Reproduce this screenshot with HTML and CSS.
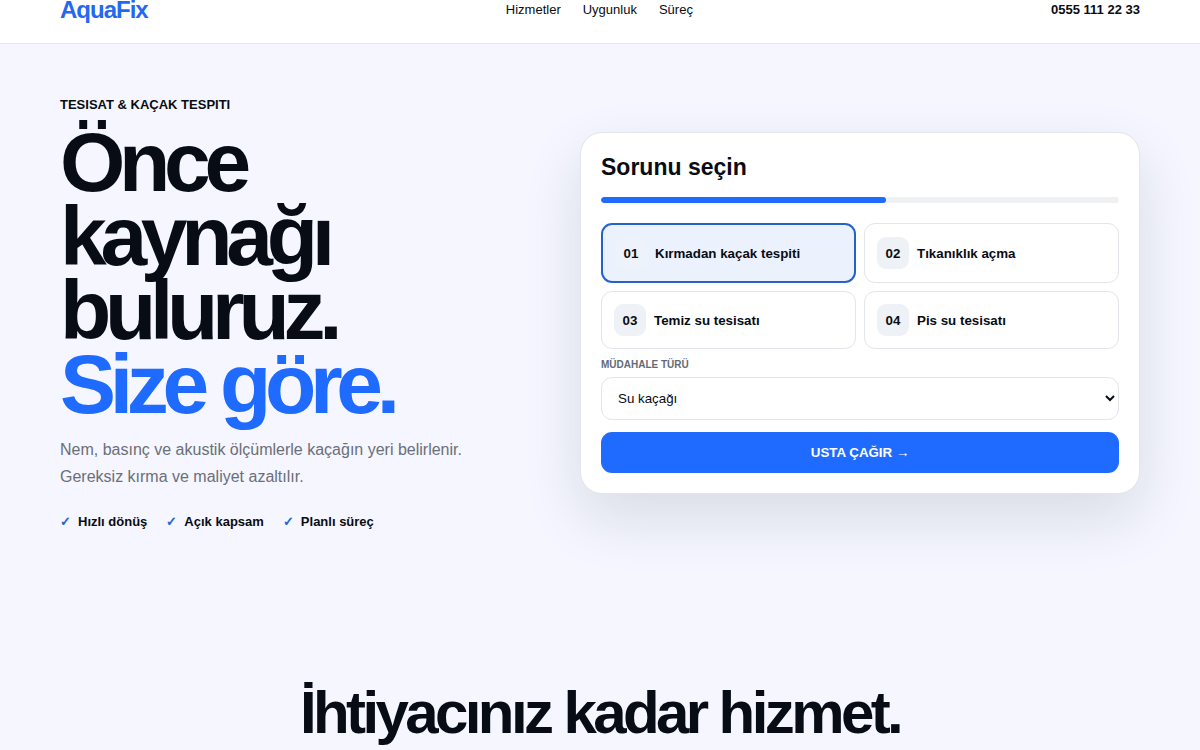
FILE: index.html
```html
<!DOCTYPE html>
<html lang="tr">
<head>
    <meta charset="UTF-8">
    <meta name="viewport" content="width=device-width, initial-scale=1.0">
    <title>AquaFix</title>
    <link rel="stylesheet" href="styles.css">
</head>
<body>
    <header class="header">
        <div class="container header-inner">
            <a href="#" class="logo">AquaFix</a>
            <nav class="nav">
                <a href="#hizmetler">Hizmetler</a>
                <a href="#uygunluk">Uygunluk</a>
                <a href="#surec">Süreç</a>
            </nav>
            <a href="tel:05551112233" class="phone">0555 111 22 33</a>
        </div>
    </header>

    <main>
        <section class="container hero">
            <div class="hero-text">
                <div class="eyebrow">TESISAT &amp; KAÇAK TESPITI</div>
                <h1>Önce<br>kaynağı<br>buluruz.<br><span class="accent">Size göre.</span></h1>
                <p class="lead">Nem, basınç ve akustik ölçümlerle kaçağın yeri belirlenir. Gereksiz kırma ve maliyet azaltılır.</p>
                <ul class="checks">
                    <li>Hızlı dönüş</li>
                    <li>Açık kapsam</li>
                    <li>Planlı süreç</li>
                </ul>
            </div>

            <form class="card">
                <h2 class="card-title">Sorunu seçin</h2>
                <div class="progress"><div class="progress-bar"></div></div>
                <div class="options">
                    <button type="button" class="option active"><span class="num">01</span>Kırmadan kaçak tespiti</button>
                    <button type="button" class="option"><span class="num">02</span>Tıkanıklık açma</button>
                    <button type="button" class="option"><span class="num">03</span>Temiz su tesisatı</button>
                    <button type="button" class="option"><span class="num">04</span>Pis su tesisatı</button>
                </div>
                <label for="tur" class="field-label">MÜDAHALE TÜRÜ</label>
                <select id="tur" class="field">
                    <option>Su kaçağı</option>
                </select>
                <button type="submit" class="submit">USTA ÇAĞIR →</button>
            </form>
        </section>

        <section class="container services" id="hizmetler">
            <h2>İhtiyacınız kadar hizmet.</h2>
        </section>
    </main>
</body>
</html>
```
FILE: styles.css
```css
* {
    margin: 0;
    padding: 0;
    box-sizing: border-box;
}

body {
    font-family: "Liberation Sans", Arial, sans-serif;
    font-size: 13px;
    background: #f5f6ff;
    color: #080c14;
}

a {
    color: inherit;
    text-decoration: none;
}

.container {
    width: 90%;
    max-width: 1180px;
    margin: 0 auto;
}

.header {
    background: #fff;
    border-bottom: 1px solid #e6e8eb;
}

.header-inner {
    display: flex;
    align-items: center;
    justify-content: space-between;
    padding-bottom: 23px;
    line-height: 20px;
}

.logo {
    font-size: 24px;
    font-weight: 700;
    letter-spacing: -1px;
    color: #2468f2;
}

.nav {
    display: flex;
    gap: 22px;
}

.phone {
    font-weight: 700;
}

.hero {
    display: grid;
    grid-template-columns: 6fr 7fr;
    gap: 40px;
    align-items: center;
    padding: 52px 0 150px;
}

.eyebrow {
    font-weight: 700;
    line-height: 18px;
    margin-bottom: 12px;
}

h1 {
    font-size: 84px;
    line-height: 0.88;
    letter-spacing: -0.075em;
    font-weight: 700;
}

.accent {
    color: #1f6bff;
}

.lead {
    max-width: 440px;
    font-size: 16px;
    line-height: 27px;
    color: #6b6f78;
    margin-top: 14px;
}

.checks {
    display: flex;
    gap: 19px;
    margin-top: 23px;
    list-style: none;
    font-weight: 700;
    line-height: 18px;
}

.checks li::before {
    content: "✓";
    color: #2468d8;
    margin-right: 7px;
}

.card {
    background: #fff;
    border: 1px solid #e2e5ea;
    border-radius: 22px;
    padding: 20px;
    box-shadow: 0 24px 60px rgba(15, 45, 45, 0.12);
}

.card-title {
    font-size: 23px;
    line-height: 28px;
    margin-bottom: 16px;
}

.progress {
    height: 6px;
    background: #eff1f3;
    border-radius: 6px;
    overflow: hidden;
    margin-bottom: 20px;
}

.progress-bar {
    width: 55%;
    height: 100%;
    background: #1f6bff;
    border-radius: 6px;
}

.options {
    display: grid;
    grid-template-columns: 1fr 1fr;
    gap: 8px;
    margin-bottom: 8px;
}

.option {
    display: flex;
    align-items: center;
    gap: 8px;
    padding: 12px;
    font-family: inherit;
    font-weight: 700;
    text-align: left;
    color: inherit;
    background: #fff;
    border: 1px solid #e2e5ea;
    border-radius: 11px;
    cursor: pointer;
}

.option.active {
    background: #ebf2fe;
    border: 2px solid #2563c9;
}

.num {
    display: grid;
    place-items: center;
    width: 32px;
    height: 32px;
    border-radius: 9px;
    background: #eef1f5;
}

.option.active .num {
    background: #edf2fb;
}

.field-label {
    display: block;
    font-size: 10px;
    font-weight: 700;
    line-height: 16px;
    color: #636b76;
    margin-bottom: 4px;
}

.field {
    display: block;
    width: 100%;
    padding: 12px;
    font-family: inherit;
    color: #080c14;
    background: #fff;
    border: 1px solid #e2e5ea;
    border-radius: 11px;
}

.submit {
    display: block;
    width: 100%;
    margin-top: 12px;
    padding: 13px;
    font-family: inherit;
    font-weight: 700;
    color: #fff;
    background: #1f6bff;
    border: 0;
    border-radius: 11px;
    cursor: pointer;
}

.services {
    padding-bottom: 80px;
    text-align: center;
}

.services h2 {
    font-size: 60px;
    line-height: 64px;
    letter-spacing: -0.06em;
}

@media (max-width: 800px) {
    .hero {
        grid-template-columns: 1fr;
    }

    h1 {
        font-size: 60px;
    }
}
```
